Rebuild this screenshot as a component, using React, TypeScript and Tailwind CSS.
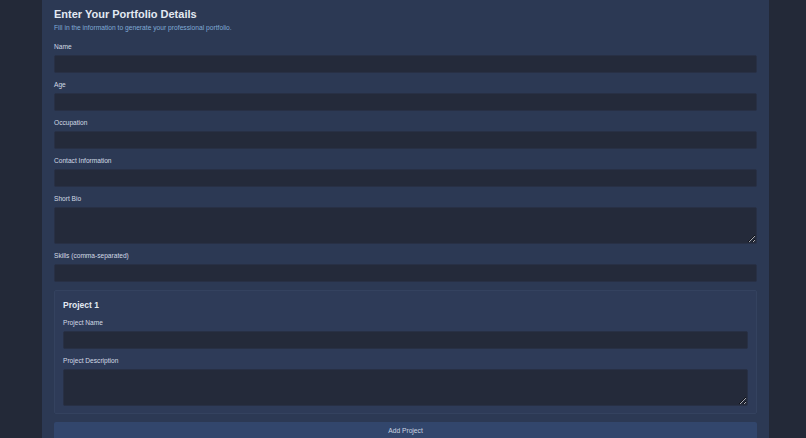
const fields = [
  { label: "Name", multi: false },
  { label: "Age", multi: false },
  { label: "Occupation", multi: false },
  { label: "Contact Information", multi: false },
  { label: "Short Bio", multi: true },
  { label: "Skills (comma-separated)", multi: false },
];

const inputCls =
  "block w-full rounded-[2px] border border-[#283045] bg-[#242a3a] px-2 text-[7px] text-slate-200 outline-none";

function Field({ label, multi }: { label: string; multi: boolean }) {
  return (
    <div className="flex flex-col">
      <label className="mb-[3px] text-[6.6px] leading-[10px] text-[#d3dae6]">
        {label}
      </label>
      {multi ? (
        <textarea className={`${inputCls} h-[37px] py-1`} />
      ) : (
        <input type="text" className={`${inputCls} h-[18px]`} />
      )}
    </div>
  );
}

export default function App() {
  return (
    <div
      className="min-h-[438px] w-full overflow-hidden bg-[#232938]"
      style={{ fontFamily: '"Liberation Sans", Arial, sans-serif' }}
    >
      <div className="ml-[42px] w-[727px] bg-[#2c3954] px-3 pt-[7px] pb-4">
        <h1 className="text-[11px] font-bold leading-[14px] text-[#e3e9f2]">
          Enter Your Portfolio Details
        </h1>
        <p className="mt-[2px] text-[6.7px] leading-[9px] text-[#80abd6]">
          Fill in the information to generate your professional portfolio.
        </p>

        <div className="mt-[10px] flex flex-col gap-[7px]">
          {fields.map((f) => (
            <Field key={f.label} label={f.label} multi={f.multi} />
          ))}
        </div>

        <div className="mt-[8px] rounded-[2px] border border-[#34425f] bg-[#2e3b58] px-2 pt-2 pb-[7px]">
          <h2 className="text-[8.5px] font-bold leading-[12px] text-[#e3e9f2]">
            Project 1
          </h2>
          <div className="mt-[7px] flex flex-col gap-[7px]">
            <Field label="Project Name" multi={false} />
            <Field label="Project Description" multi={true} />
          </div>
        </div>

        <button
          type="button"
          className="mt-[8px] block h-[18px] w-full rounded-[2px] bg-[#32466c] text-[6.7px] text-[#cbd5e1]"
        >
          Add Project
        </button>
      </div>
    </div>
  );
}
